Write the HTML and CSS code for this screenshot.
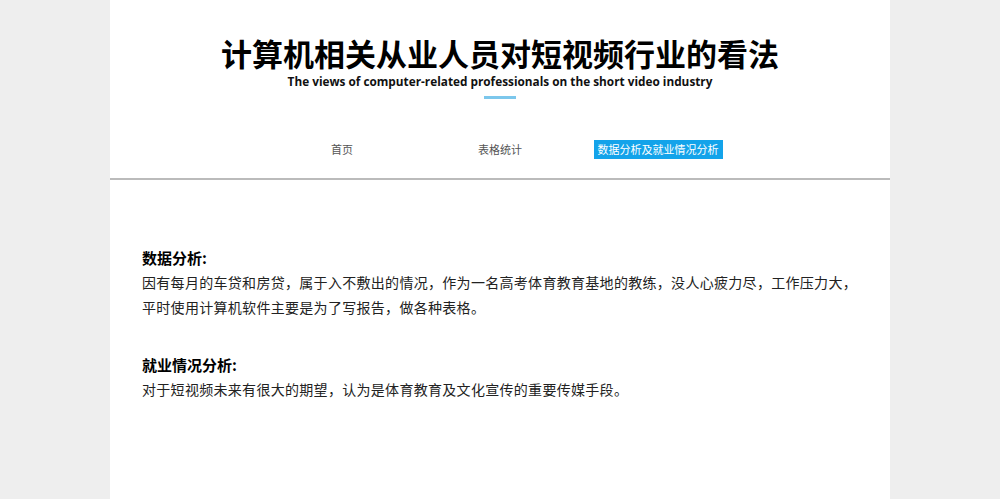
FILE: index.html
```html
<!DOCTYPE html>
<html lang="zh-CN">
<head>
  <meta charset="UTF-8" />
  <meta name="viewport" content="width=device-width, initial-scale=1.0"/>
  <title>计算机相关从业人员对短视频行业的看法</title>
  <link rel="stylesheet" href="styles.css">
</head>
<body>

<div class="page">
  <header>
    <h1>计算机相关从业人员对短视频行业的看法</h1>
    <p class="sub">The views of computer-related professionals on the short video industry</p>
    <div class="bar"></div>
  </header>

  <nav>
    <a href="#">首页</a>
    <a href="#">表格统计</a>
    <a class="active" href="#">数据分析及就业情况分析</a>
  </nav>

  <div class="content">
    <div class="block">
      <h2>数据分析:</h2>
      <p>因有每月的车贷和房贷，属于入不敷出的情况，作为一名高考体育教育基地的教练，没人心疲力尽，工作压力大，平时使用计算机软件主要是为了写报告，做各种表格。</p>
    </div>
    <div class="block">
      <h2>就业情况分析:</h2>
      <p>对于短视频未来有很大的期望，认为是体育教育及文化宣传的重要传媒手段。</p>
    </div>
  </div>
</div>

</body>
</html>
```

FILE: styles.css
```css
body { margin: 0; background: #eeeeee; font-family: "Noto Sans CJK SC", "Noto Sans", sans-serif; color: #222; }
.page { width: 780px; margin: 0 auto; background: #fff; min-height: 499px; }
header { text-align: center; padding-top: 35px; }
h1 { margin: 0; font-size: 31px; line-height: 35px; font-weight: bold; color: #000; }
.sub { margin: 4px 0 0; font-family: "Open Sans", sans-serif; font-weight: bold; font-size: 11.8px; line-height: 14px; color: #111; }
.bar { width: 32px; height: 3px; background: #7cc7ec; margin: 8px auto 0; }
nav { display: grid; grid-template-columns: repeat(3, 158px); justify-content: center; justify-items: center; padding: 41px 0 19px; border-bottom: 2px solid #bbb; }
nav a { font-size: 11px; line-height: 19px; padding: 0 4px; color: #555; text-decoration: none; }
nav a.active { background: #13a3ea; color: #fff; }
.content { padding: 65px 32px 40px; }
.block { margin-bottom: 32px; }
h2 { margin: 0; font-size: 15px; line-height: 25px; color: #000; }
.block p { margin: 0; font-size: 14px; letter-spacing: 0.3px; line-height: 25px; }
```
